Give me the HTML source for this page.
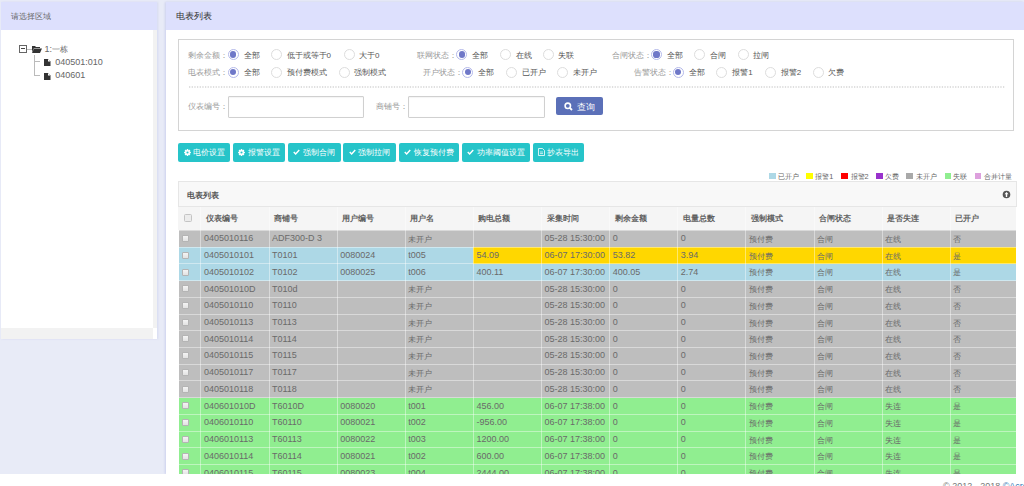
<!DOCTYPE html>
<html><head><meta charset="utf-8">
<style>
*{box-sizing:border-box;margin:0;padding:0}
html,body{width:1024px;height:486px;overflow:hidden;background:#e8ebf7;font-family:"Liberation Sans",sans-serif;color:#555}
.a{position:absolute;white-space:nowrap}
.panel-h{position:absolute;background:#dde0fd}
.ttl{position:absolute;font-size:8px;color:#666;line-height:10px}
#lp{position:absolute;left:1px;top:1.5px;width:156px;height:337.5px;box-shadow:1px 0 2px rgba(110,120,210,.15)}
#rp{position:absolute;left:166px;top:1.5px;width:858px;height:472px;background:#fff;box-shadow:-1px 0 2px rgba(110,120,210,.22)}
#foot{position:absolute;left:0;top:473.6px;width:1024px;height:13px;background:#fff}
.lbl{position:absolute;font-size:7.6px;color:#999;line-height:10px;white-space:nowrap}
.opt{position:absolute;font-size:8px;color:#555;line-height:10px;white-space:nowrap}
.rad{position:absolute;width:11px;height:11px;border-radius:50%;border:1px solid #ddd;background:#fff}
.rad.on{border:1.2px solid #b4b9ea}
.rad.on:after{content:"";position:absolute;left:1.3px;top:1.3px;width:6.2px;height:6.2px;border-radius:50%;background:#6f78c8}
.btn{position:absolute;top:143px;height:18.7px;background:#26c4c9;border-radius:2px;color:#fff;font-size:7.5px;line-height:18.7px;padding-top:0.8px;white-space:nowrap}
.leg{position:absolute;top:172.5px;width:6.6px;height:6.4px}
.legt{position:absolute;top:171.6px;font-size:7.3px;line-height:10px;color:#666;white-space:nowrap}
.gl{background:rgba(255,255,255,.42)}
.th{font-size:7.8px;line-height:10px;color:#606060;font-weight:700}
.td{font-size:9px;line-height:10px;color:#6a6a6a}
.c{font-size:8.3px;position:relative;top:0.5px}
.hcb{width:7.5px;height:7.5px;background:#ececec;border:1px solid #c4c4c4;border-radius:1.5px}
.rcb{width:7px;height:7px;background:linear-gradient(#f4f4f4,#e2e2e2);border:1px solid #b4b4b4;border-radius:1px}
</style></head><body>

<!-- left panel -->
<div id="lp">
  <div class="panel-h" style="left:0;top:0;width:156px;height:28px"></div>
  <div class="ttl" style="left:9.5px;top:10.5px">请选择区域</div>
  <div style="position:absolute;left:0;top:28px;width:152px;height:299px;background:#fff"></div>
  <div style="position:absolute;left:152px;top:28px;width:4px;height:299px;background:#f2f2f2"></div>
  <div style="position:absolute;left:0;top:326.5px;width:152px;height:11px;background:#f2f2f2"></div>
  <div style="position:absolute;left:152px;top:326.5px;width:4px;height:11px;background:#fff"></div>
</div>
<!-- tree -->
<div class="a" style="left:19px;top:44.7px;width:8px;height:8px;border:1px solid #666"></div>
<div class="a" style="left:21px;top:48.3px;width:4px;height:1px;background:#444"></div>
<div class="a" style="left:27px;top:48.5px;width:5px;height:1px;background:#bbb"></div>
<svg class="a" style="left:32px;top:45px" width="10" height="8" viewBox="0 0 10 8"><path d="M0 1h3l1 1h4v1H2L0 7z M2 3.5h8L8 8H0z" fill="#333"/></svg>
<div class="a" style="left:44.5px;top:44px;font-size:9px;line-height:10px;color:#666">1:<span style="font-size:8px">一栋</span></div>
<div class="a" style="left:34.4px;top:55px;width:1px;height:20px;background:#bbb"></div>
<div class="a" style="left:34.4px;top:61px;width:6px;height:1px;background:#bbb"></div>
<div class="a" style="left:34.4px;top:75px;width:6px;height:1px;background:#bbb"></div>
<svg class="a" style="left:44px;top:59px" width="7" height="7" viewBox="0 0 7 7"><path d="M0 0h4l2.5 2.5V7H0z" fill="#333"/><path d="M4 0v2.5h2.5" fill="#fff"/></svg>
<svg class="a" style="left:44px;top:72.5px" width="7" height="7" viewBox="0 0 7 7"><path d="M0 0h4l2.5 2.5V7H0z" fill="#333"/><path d="M4 0v2.5h2.5" fill="#fff"/></svg>
<div class="a" style="left:55.3px;top:56.5px;font-size:9px;line-height:10px;color:#666">040501:010</div>
<div class="a" style="left:55.3px;top:70px;font-size:9px;line-height:10px;color:#666">040601</div>

<!-- right panel -->
<div id="rp">
  <div class="panel-h" style="left:0;top:0;width:858px;height:28px"></div>
  <div class="ttl" style="left:9.5px;top:9.6px;color:#333;font-size:9px;font-weight:400">电表列表</div>
</div>

<!-- filter box -->
<div class="a" style="left:178px;top:39px;width:836px;height:92px;border:1px solid #d4d4d4"></div>
<svg class="a" style="left:188.5px;top:86px" width="816" height="2"><line x1="0" y1="1" x2="816" y2="1" stroke="#c0c0c0" stroke-width="1.1" stroke-dasharray="1.3 1.36"/></svg>


<div class="lbl" style="left:188.2px;top:50.70px">剩余金额：</div>
<div class="rad on" style="left:227.60px;top:49.10px"></div>
<div class="opt" style="left:243.75px;top:50.80px">全部</div>
<div class="rad" style="left:271.05px;top:49.10px"></div>
<div class="opt" style="left:286.6px;top:50.80px">低于或等于0</div>
<div class="rad" style="left:343.55px;top:49.10px"></div>
<div class="opt" style="left:359px;top:50.80px">大于0</div>
<div class="lbl" style="left:417.2px;top:50.70px">联网状态：</div>
<div class="rad on" style="left:456.40px;top:49.10px"></div>
<div class="opt" style="left:471.9px;top:50.80px">全部</div>
<div class="rad" style="left:499.80px;top:49.10px"></div>
<div class="opt" style="left:515.6px;top:50.80px">在线</div>
<div class="rad" style="left:543.20px;top:49.10px"></div>
<div class="opt" style="left:558.4px;top:50.80px">失联</div>
<div class="lbl" style="left:611.6px;top:50.70px">合闸状态：</div>
<div class="rad on" style="left:651.05px;top:49.10px"></div>
<div class="opt" style="left:666.6px;top:50.80px">全部</div>
<div class="rad" style="left:694.20px;top:49.10px"></div>
<div class="opt" style="left:710px;top:50.80px">合闸</div>
<div class="rad" style="left:737.50px;top:49.10px"></div>
<div class="opt" style="left:753.2px;top:50.80px">拉闸</div>
<div class="lbl" style="left:188.2px;top:68.20px">电表模式：</div>
<div class="rad on" style="left:227.60px;top:66.60px"></div>
<div class="opt" style="left:243.75px;top:68.30px">全部</div>
<div class="rad" style="left:271.05px;top:66.60px"></div>
<div class="opt" style="left:286.6px;top:68.30px">预付费模式</div>
<div class="rad" style="left:338.55px;top:66.60px"></div>
<div class="opt" style="left:354.4px;top:68.30px">强制模式</div>
<div class="lbl" style="left:422.8px;top:68.20px">开户状态：</div>
<div class="rad on" style="left:462.30px;top:66.60px"></div>
<div class="opt" style="left:478px;top:68.30px">全部</div>
<div class="rad" style="left:505.80px;top:66.60px"></div>
<div class="opt" style="left:521.9px;top:68.30px">已开户</div>
<div class="rad" style="left:557.30px;top:66.60px"></div>
<div class="opt" style="left:572.8px;top:68.30px">未开户</div>
<div class="lbl" style="left:633.75px;top:68.20px">告警状态：</div>
<div class="rad on" style="left:672.80px;top:66.60px"></div>
<div class="opt" style="left:689px;top:68.30px">全部</div>
<div class="rad" style="left:716.30px;top:66.60px"></div>
<div class="opt" style="left:732.3px;top:68.30px">报警1</div>
<div class="rad" style="left:765.10px;top:66.60px"></div>
<div class="opt" style="left:780.7px;top:68.30px">报警2</div>
<div class="rad" style="left:812.80px;top:66.60px"></div>
<div class="opt" style="left:828.2px;top:68.30px">欠费</div>
<div class="lbl" style="left:188px;top:102.00px">仪表编号：</div>
<div class="a" style="left:228.1px;top:96px;width:136.2px;height:21.6px;border:1px solid #d0d0d0;border-radius:1px;box-shadow:inset 0 0.5px 1px rgba(0,0,0,.08);background:#fff"></div>
<div class="lbl" style="left:375.6px;top:102.00px">商铺号：</div>
<div class="a" style="left:408.4px;top:96px;width:136.4px;height:21.6px;border:1px solid #d0d0d0;border-radius:1px;box-shadow:inset 0 0.5px 1px rgba(0,0,0,.08);background:#fff"></div>
<div class="a" style="left:556.25px;top:96.6px;width:46.25px;height:18.4px;background:#5b70b8;border-radius:2px"></div>
<svg class="a" style="left:564px;top:101.5px" width="9" height="9" viewBox="0 0 9 9"><circle cx="3.8" cy="3.8" r="2.7" stroke="#fff" stroke-width="1.6" fill="none"/><path d="M5.8 5.8L8 8" stroke="#fff" stroke-width="1.8"/></svg>
<div class="a" style="left:577px;top:101.7px;font-size:8.7px;line-height:10px;color:#fff">查询</div>
<div class="btn" style="left:178.3px;width:51.89999999999998px;text-align:center"><svg width="7" height="7" viewBox="0 0 8 8" style="vertical-align:-1.2px;margin-right:2.2px"><g fill="#fff"><circle cx="4" cy="4" r="2.9"/><rect x="3.1" y="0.1" width="1.8" height="7.8" rx="0.3" transform="rotate(0 4 4)"/><rect x="3.1" y="0.1" width="1.8" height="7.8" rx="0.3" transform="rotate(45 4 4)"/><rect x="3.1" y="0.1" width="1.8" height="7.8" rx="0.3" transform="rotate(90 4 4)"/><rect x="3.1" y="0.1" width="1.8" height="7.8" rx="0.3" transform="rotate(135 4 4)"/></g><circle cx="4" cy="4" r="1.2" fill="#26c4c9"/></svg>电价设置</div>
<div class="btn" style="left:233.2px;width:51.60000000000002px;text-align:center"><svg width="7" height="7" viewBox="0 0 8 8" style="vertical-align:-1.2px;margin-right:2.2px"><g fill="#fff"><circle cx="4" cy="4" r="2.9"/><rect x="3.1" y="0.1" width="1.8" height="7.8" rx="0.3" transform="rotate(0 4 4)"/><rect x="3.1" y="0.1" width="1.8" height="7.8" rx="0.3" transform="rotate(45 4 4)"/><rect x="3.1" y="0.1" width="1.8" height="7.8" rx="0.3" transform="rotate(90 4 4)"/><rect x="3.1" y="0.1" width="1.8" height="7.8" rx="0.3" transform="rotate(135 4 4)"/></g><circle cx="4" cy="4" r="1.2" fill="#26c4c9"/></svg>报警设置</div>
<div class="btn" style="left:287.5px;width:53.39999999999998px;text-align:center"><svg width="7" height="6" viewBox="0 0 8 7" style="vertical-align:-0.5px;margin-right:2.5px"><path d="M0.8 3.6L3 5.8L7.2 1.2" stroke="#fff" stroke-width="1.7" fill="none"/></svg>强制合闸</div>
<div class="btn" style="left:343.2px;width:53.0px;text-align:center"><svg width="7" height="6" viewBox="0 0 8 7" style="vertical-align:-0.5px;margin-right:2.5px"><path d="M0.8 3.6L3 5.8L7.2 1.2" stroke="#fff" stroke-width="1.7" fill="none"/></svg>强制拉闸</div>
<div class="btn" style="left:398.9px;width:60.60000000000002px;text-align:center"><svg width="7" height="6" viewBox="0 0 8 7" style="vertical-align:-0.5px;margin-right:2.5px"><path d="M0.8 3.6L3 5.8L7.2 1.2" stroke="#fff" stroke-width="1.7" fill="none"/></svg>恢复预付费</div>
<div class="btn" style="left:462.4px;width:67.39999999999998px;text-align:center"><svg width="7" height="6" viewBox="0 0 8 7" style="vertical-align:-0.5px;margin-right:2.5px"><path d="M0.8 3.6L3 5.8L7.2 1.2" stroke="#fff" stroke-width="1.7" fill="none"/></svg>功率阈值设置</div>
<div class="btn" style="left:533.1px;width:51.39999999999998px;text-align:center"><svg width="7" height="8" viewBox="0 0 7 8" style="vertical-align:-1.5px;margin-right:2px"><path d="M0.5 0.5h4l2 2v5h-6z" stroke="#fff" stroke-width="0.8" fill="none"/><path d="M2 4h3M2 5.6h3" stroke="#fff" stroke-width="0.7"/></svg>抄表导出</div>
<div class="leg" style="left:769px;background:#add8e6"></div><div class="legt" style="left:778px">已开户</div>
<div class="leg" style="left:806.2px;background:#ffff00"></div><div class="legt" style="left:815.3px">报警1</div>
<div class="leg" style="left:841.4px;background:#ff0000"></div><div class="legt" style="left:850.5px">报警2</div>
<div class="leg" style="left:876.2px;background:#9932cc"></div><div class="legt" style="left:884.9px">欠费</div>
<div class="leg" style="left:906.4px;background:#a9a9a9"></div><div class="legt" style="left:915.5px">未开户</div>
<div class="leg" style="left:944.5px;background:#90ee90"></div><div class="legt" style="left:953.2px">失联</div>
<div class="leg" style="left:974.7px;background:#dda0dd"></div><div class="legt" style="left:983.9px">合并计量</div>
<div class="a" style="left:178.4px;top:181.4px;width:838.6px;height:25.6px;background:#f8f8f8;border:1px solid #e6e6e6"></div>
<div class="a" style="left:186.5px;top:190.5px;font-size:8px;line-height:10px;color:#555;font-weight:700">电表列表</div>
<svg class="a" style="left:1002px;top:190px" width="9" height="9" viewBox="0 0 9 9"><circle cx="4.5" cy="4.5" r="3.8" fill="#555"/><path d="M4.5 2L2.5 4.3h1.3V7h1.4V4.3h1.3z" fill="#fff"/></svg>
<div class="a" style="left:178.4px;top:206.5px;width:838.0px;height:23.900000000000006px;background:#f5f5f5"></div>
<div class="a" style="left:179.00px;top:230.40px;width:837.40px;height:17.33px;background:#bebebe"></div>
<div class="a" style="left:179.00px;top:247.13px;width:837.40px;height:17.33px;background:#add8e6"></div>
<div class="a" style="left:473.42px;top:247.13px;width:542.98px;height:16.73px;background:#ffd700"></div>
<div class="a" style="left:179.00px;top:263.86px;width:837.40px;height:17.33px;background:#add8e6"></div>
<div class="a" style="left:179.00px;top:280.59px;width:837.40px;height:17.33px;background:#bebebe"></div>
<div class="a" style="left:179.00px;top:297.32px;width:837.40px;height:17.33px;background:#bebebe"></div>
<div class="a" style="left:179.00px;top:314.05px;width:837.40px;height:17.33px;background:#bebebe"></div>
<div class="a" style="left:179.00px;top:330.78px;width:837.40px;height:17.33px;background:#bebebe"></div>
<div class="a" style="left:179.00px;top:347.51px;width:837.40px;height:17.33px;background:#bebebe"></div>
<div class="a" style="left:179.00px;top:364.24px;width:837.40px;height:17.33px;background:#bebebe"></div>
<div class="a" style="left:179.00px;top:380.97px;width:837.40px;height:17.33px;background:#bebebe"></div>
<div class="a" style="left:179.00px;top:397.70px;width:837.40px;height:17.33px;background:#90ee90"></div>
<div class="a" style="left:179.00px;top:414.43px;width:837.40px;height:17.33px;background:#90ee90"></div>
<div class="a" style="left:179.00px;top:431.16px;width:837.40px;height:17.33px;background:#90ee90"></div>
<div class="a" style="left:179.00px;top:447.89px;width:837.40px;height:17.33px;background:#90ee90"></div>
<div class="a" style="left:179.00px;top:464.62px;width:837.40px;height:17.33px;background:#90ee90"></div>
<div class="a gl" style="left:200.40px;top:206.5px;width:1px;height:279.5px"></div>
<div class="a gl" style="left:268.53px;top:206.5px;width:1px;height:279.5px"></div>
<div class="a gl" style="left:336.66px;top:206.5px;width:1px;height:279.5px"></div>
<div class="a gl" style="left:404.79px;top:206.5px;width:1px;height:279.5px"></div>
<div class="a gl" style="left:472.92px;top:206.5px;width:1px;height:279.5px"></div>
<div class="a gl" style="left:541.05px;top:206.5px;width:1px;height:279.5px"></div>
<div class="a gl" style="left:609.18px;top:206.5px;width:1px;height:279.5px"></div>
<div class="a gl" style="left:677.31px;top:206.5px;width:1px;height:279.5px"></div>
<div class="a gl" style="left:745.44px;top:206.5px;width:1px;height:279.5px"></div>
<div class="a gl" style="left:813.57px;top:206.5px;width:1px;height:279.5px"></div>
<div class="a gl" style="left:881.70px;top:206.5px;width:1px;height:279.5px"></div>
<div class="a gl" style="left:949.83px;top:206.5px;width:1px;height:279.5px"></div>
<div class="a gl" style="left:178.4px;top:229.90px;width:838.0px;height:1px"></div>
<div class="a gl" style="left:178.4px;top:246.63px;width:838.0px;height:1px"></div>
<div class="a gl" style="left:178.4px;top:263.36px;width:838.0px;height:1px"></div>
<div class="a gl" style="left:178.4px;top:280.09px;width:838.0px;height:1px"></div>
<div class="a gl" style="left:178.4px;top:296.82px;width:838.0px;height:1px"></div>
<div class="a gl" style="left:178.4px;top:313.55px;width:838.0px;height:1px"></div>
<div class="a gl" style="left:178.4px;top:330.28px;width:838.0px;height:1px"></div>
<div class="a gl" style="left:178.4px;top:347.01px;width:838.0px;height:1px"></div>
<div class="a gl" style="left:178.4px;top:363.74px;width:838.0px;height:1px"></div>
<div class="a gl" style="left:178.4px;top:380.47px;width:838.0px;height:1px"></div>
<div class="a gl" style="left:178.4px;top:397.20px;width:838.0px;height:1px"></div>
<div class="a gl" style="left:178.4px;top:413.93px;width:838.0px;height:1px"></div>
<div class="a gl" style="left:178.4px;top:430.66px;width:838.0px;height:1px"></div>
<div class="a gl" style="left:178.4px;top:447.39px;width:838.0px;height:1px"></div>
<div class="a gl" style="left:178.4px;top:464.12px;width:838.0px;height:1px"></div>
<div class="a gl" style="left:178.4px;top:480.85px;width:838.0px;height:1px"></div>
<div class="a hcb" style="left:184.1px;top:214.2px"></div>
<div class="a th" style="left:205.90px;top:214.05px">仪表编号</div>
<div class="a th" style="left:274.03px;top:214.05px">商铺号</div>
<div class="a th" style="left:342.16px;top:214.05px">用户编号</div>
<div class="a th" style="left:410.29px;top:214.05px">用户名</div>
<div class="a th" style="left:478.42px;top:214.05px">购电总额</div>
<div class="a th" style="left:546.55px;top:214.05px">采集时间</div>
<div class="a th" style="left:614.68px;top:214.05px">剩余金额</div>
<div class="a th" style="left:682.81px;top:214.05px">电量总数</div>
<div class="a th" style="left:750.94px;top:214.05px">强制模式</div>
<div class="a th" style="left:819.07px;top:214.05px">合闸状态</div>
<div class="a th" style="left:887.20px;top:214.05px">是否失连</div>
<div class="a th" style="left:955.33px;top:214.05px">已开户</div>
<div class="a rcb" style="left:182px;top:235.07px"></div>
<div class="a td" style="left:203.90px;top:233.37px">0405010116</div>
<div class="a td" style="left:272.03px;top:233.37px">ADF300-D 3</div>
<div class="a td" style="left:408.29px;top:233.37px"><span class=c>未开户</span></div>
<div class="a td" style="left:544.55px;top:233.37px">05-28 15:30:00</div>
<div class="a td" style="left:612.68px;top:233.37px">0</div>
<div class="a td" style="left:680.81px;top:233.37px">0</div>
<div class="a td" style="left:748.94px;top:233.37px"><span class=c>预付费</span></div>
<div class="a td" style="left:817.07px;top:233.37px"><span class=c>合闸</span></div>
<div class="a td" style="left:885.20px;top:233.37px"><span class=c>在线</span></div>
<div class="a td" style="left:953.33px;top:233.37px"><span class=c>否</span></div>
<div class="a rcb" style="left:182px;top:251.80px"></div>
<div class="a td" style="left:203.90px;top:250.09px">0405010101</div>
<div class="a td" style="left:272.03px;top:250.09px">T0101</div>
<div class="a td" style="left:340.16px;top:250.09px">0080024</div>
<div class="a td" style="left:408.29px;top:250.09px">t005</div>
<div class="a td" style="left:476.42px;top:250.09px">54.09</div>
<div class="a td" style="left:544.55px;top:250.09px">06-07 17:30:00</div>
<div class="a td" style="left:612.68px;top:250.09px">53.82</div>
<div class="a td" style="left:680.81px;top:250.09px">3.94</div>
<div class="a td" style="left:748.94px;top:250.09px"><span class=c>预付费</span></div>
<div class="a td" style="left:817.07px;top:250.09px"><span class=c>合闸</span></div>
<div class="a td" style="left:885.20px;top:250.09px"><span class=c>在线</span></div>
<div class="a td" style="left:953.33px;top:250.09px"><span class=c>是</span></div>
<div class="a rcb" style="left:182px;top:268.53px"></div>
<div class="a td" style="left:203.90px;top:266.83px">0405010102</div>
<div class="a td" style="left:272.03px;top:266.83px">T0102</div>
<div class="a td" style="left:340.16px;top:266.83px">0080025</div>
<div class="a td" style="left:408.29px;top:266.83px">t006</div>
<div class="a td" style="left:476.42px;top:266.83px">400.11</div>
<div class="a td" style="left:544.55px;top:266.83px">06-07 17:30:00</div>
<div class="a td" style="left:612.68px;top:266.83px">400.05</div>
<div class="a td" style="left:680.81px;top:266.83px">2.74</div>
<div class="a td" style="left:748.94px;top:266.83px"><span class=c>预付费</span></div>
<div class="a td" style="left:817.07px;top:266.83px"><span class=c>合闸</span></div>
<div class="a td" style="left:885.20px;top:266.83px"><span class=c>在线</span></div>
<div class="a td" style="left:953.33px;top:266.83px"><span class=c>是</span></div>
<div class="a rcb" style="left:182px;top:285.26px"></div>
<div class="a td" style="left:203.90px;top:283.56px">040501010D</div>
<div class="a td" style="left:272.03px;top:283.56px">T010d</div>
<div class="a td" style="left:408.29px;top:283.56px"><span class=c>未开户</span></div>
<div class="a td" style="left:544.55px;top:283.56px">05-28 15:30:00</div>
<div class="a td" style="left:612.68px;top:283.56px">0</div>
<div class="a td" style="left:680.81px;top:283.56px">0</div>
<div class="a td" style="left:748.94px;top:283.56px"><span class=c>预付费</span></div>
<div class="a td" style="left:817.07px;top:283.56px"><span class=c>合闸</span></div>
<div class="a td" style="left:885.20px;top:283.56px"><span class=c>在线</span></div>
<div class="a td" style="left:953.33px;top:283.56px"><span class=c>否</span></div>
<div class="a rcb" style="left:182px;top:301.99px"></div>
<div class="a td" style="left:203.90px;top:300.29px">0405010110</div>
<div class="a td" style="left:272.03px;top:300.29px">T0110</div>
<div class="a td" style="left:408.29px;top:300.29px"><span class=c>未开户</span></div>
<div class="a td" style="left:544.55px;top:300.29px">05-28 15:30:00</div>
<div class="a td" style="left:612.68px;top:300.29px">0</div>
<div class="a td" style="left:680.81px;top:300.29px">0</div>
<div class="a td" style="left:748.94px;top:300.29px"><span class=c>预付费</span></div>
<div class="a td" style="left:817.07px;top:300.29px"><span class=c>合闸</span></div>
<div class="a td" style="left:885.20px;top:300.29px"><span class=c>在线</span></div>
<div class="a td" style="left:953.33px;top:300.29px"><span class=c>否</span></div>
<div class="a rcb" style="left:182px;top:318.72px"></div>
<div class="a td" style="left:203.90px;top:317.02px">0405010113</div>
<div class="a td" style="left:272.03px;top:317.02px">T0113</div>
<div class="a td" style="left:408.29px;top:317.02px"><span class=c>未开户</span></div>
<div class="a td" style="left:544.55px;top:317.02px">05-28 15:30:00</div>
<div class="a td" style="left:612.68px;top:317.02px">0</div>
<div class="a td" style="left:680.81px;top:317.02px">0</div>
<div class="a td" style="left:748.94px;top:317.02px"><span class=c>预付费</span></div>
<div class="a td" style="left:817.07px;top:317.02px"><span class=c>合闸</span></div>
<div class="a td" style="left:885.20px;top:317.02px"><span class=c>在线</span></div>
<div class="a td" style="left:953.33px;top:317.02px"><span class=c>否</span></div>
<div class="a rcb" style="left:182px;top:335.44px"></div>
<div class="a td" style="left:203.90px;top:333.75px">0405010114</div>
<div class="a td" style="left:272.03px;top:333.75px">T0114</div>
<div class="a td" style="left:408.29px;top:333.75px"><span class=c>未开户</span></div>
<div class="a td" style="left:544.55px;top:333.75px">05-28 15:30:00</div>
<div class="a td" style="left:612.68px;top:333.75px">0</div>
<div class="a td" style="left:680.81px;top:333.75px">0</div>
<div class="a td" style="left:748.94px;top:333.75px"><span class=c>预付费</span></div>
<div class="a td" style="left:817.07px;top:333.75px"><span class=c>合闸</span></div>
<div class="a td" style="left:885.20px;top:333.75px"><span class=c>在线</span></div>
<div class="a td" style="left:953.33px;top:333.75px"><span class=c>否</span></div>
<div class="a rcb" style="left:182px;top:352.18px"></div>
<div class="a td" style="left:203.90px;top:350.48px">0405010115</div>
<div class="a td" style="left:272.03px;top:350.48px">T0115</div>
<div class="a td" style="left:408.29px;top:350.48px"><span class=c>未开户</span></div>
<div class="a td" style="left:544.55px;top:350.48px">05-28 15:30:00</div>
<div class="a td" style="left:612.68px;top:350.48px">0</div>
<div class="a td" style="left:680.81px;top:350.48px">0</div>
<div class="a td" style="left:748.94px;top:350.48px"><span class=c>预付费</span></div>
<div class="a td" style="left:817.07px;top:350.48px"><span class=c>合闸</span></div>
<div class="a td" style="left:885.20px;top:350.48px"><span class=c>在线</span></div>
<div class="a td" style="left:953.33px;top:350.48px"><span class=c>否</span></div>
<div class="a rcb" style="left:182px;top:368.91px"></div>
<div class="a td" style="left:203.90px;top:367.21px">0405010117</div>
<div class="a td" style="left:272.03px;top:367.21px">T0117</div>
<div class="a td" style="left:408.29px;top:367.21px"><span class=c>未开户</span></div>
<div class="a td" style="left:544.55px;top:367.21px">05-28 15:30:00</div>
<div class="a td" style="left:612.68px;top:367.21px">0</div>
<div class="a td" style="left:680.81px;top:367.21px">0</div>
<div class="a td" style="left:748.94px;top:367.21px"><span class=c>预付费</span></div>
<div class="a td" style="left:817.07px;top:367.21px"><span class=c>合闸</span></div>
<div class="a td" style="left:885.20px;top:367.21px"><span class=c>在线</span></div>
<div class="a td" style="left:953.33px;top:367.21px"><span class=c>否</span></div>
<div class="a rcb" style="left:182px;top:385.64px"></div>
<div class="a td" style="left:203.90px;top:383.94px">0405010118</div>
<div class="a td" style="left:272.03px;top:383.94px">T0118</div>
<div class="a td" style="left:408.29px;top:383.94px"><span class=c>未开户</span></div>
<div class="a td" style="left:544.55px;top:383.94px">05-28 15:30:00</div>
<div class="a td" style="left:612.68px;top:383.94px">0</div>
<div class="a td" style="left:680.81px;top:383.94px">0</div>
<div class="a td" style="left:748.94px;top:383.94px"><span class=c>预付费</span></div>
<div class="a td" style="left:817.07px;top:383.94px"><span class=c>合闸</span></div>
<div class="a td" style="left:885.20px;top:383.94px"><span class=c>在线</span></div>
<div class="a td" style="left:953.33px;top:383.94px"><span class=c>否</span></div>
<div class="a rcb" style="left:182px;top:402.37px"></div>
<div class="a td" style="left:203.90px;top:400.67px">040601010D</div>
<div class="a td" style="left:272.03px;top:400.67px">T6010D</div>
<div class="a td" style="left:340.16px;top:400.67px">0080020</div>
<div class="a td" style="left:408.29px;top:400.67px">t001</div>
<div class="a td" style="left:476.42px;top:400.67px">456.00</div>
<div class="a td" style="left:544.55px;top:400.67px">06-07 17:38:00</div>
<div class="a td" style="left:612.68px;top:400.67px">0</div>
<div class="a td" style="left:680.81px;top:400.67px">0</div>
<div class="a td" style="left:748.94px;top:400.67px"><span class=c>预付费</span></div>
<div class="a td" style="left:817.07px;top:400.67px"><span class=c>合闸</span></div>
<div class="a td" style="left:885.20px;top:400.67px"><span class=c>失连</span></div>
<div class="a td" style="left:953.33px;top:400.67px"><span class=c>是</span></div>
<div class="a rcb" style="left:182px;top:419.10px"></div>
<div class="a td" style="left:203.90px;top:417.40px">0406010110</div>
<div class="a td" style="left:272.03px;top:417.40px">T60110</div>
<div class="a td" style="left:340.16px;top:417.40px">0080021</div>
<div class="a td" style="left:408.29px;top:417.40px">t002</div>
<div class="a td" style="left:476.42px;top:417.40px">-956.00</div>
<div class="a td" style="left:544.55px;top:417.40px">06-07 17:38:00</div>
<div class="a td" style="left:612.68px;top:417.40px">0</div>
<div class="a td" style="left:680.81px;top:417.40px">0</div>
<div class="a td" style="left:748.94px;top:417.40px"><span class=c>预付费</span></div>
<div class="a td" style="left:817.07px;top:417.40px"><span class=c>合闸</span></div>
<div class="a td" style="left:885.20px;top:417.40px"><span class=c>失连</span></div>
<div class="a td" style="left:953.33px;top:417.40px"><span class=c>是</span></div>
<div class="a rcb" style="left:182px;top:435.82px"></div>
<div class="a td" style="left:203.90px;top:434.12px">0406010113</div>
<div class="a td" style="left:272.03px;top:434.12px">T60113</div>
<div class="a td" style="left:340.16px;top:434.12px">0080022</div>
<div class="a td" style="left:408.29px;top:434.12px">t003</div>
<div class="a td" style="left:476.42px;top:434.12px">1200.00</div>
<div class="a td" style="left:544.55px;top:434.12px">06-07 17:38:00</div>
<div class="a td" style="left:612.68px;top:434.12px">0</div>
<div class="a td" style="left:680.81px;top:434.12px">0</div>
<div class="a td" style="left:748.94px;top:434.12px"><span class=c>预付费</span></div>
<div class="a td" style="left:817.07px;top:434.12px"><span class=c>合闸</span></div>
<div class="a td" style="left:885.20px;top:434.12px"><span class=c>失连</span></div>
<div class="a td" style="left:953.33px;top:434.12px"><span class=c>是</span></div>
<div class="a rcb" style="left:182px;top:452.56px"></div>
<div class="a td" style="left:203.90px;top:450.86px">0406010114</div>
<div class="a td" style="left:272.03px;top:450.86px">T60114</div>
<div class="a td" style="left:340.16px;top:450.86px">0080021</div>
<div class="a td" style="left:408.29px;top:450.86px">t002</div>
<div class="a td" style="left:476.42px;top:450.86px">600.00</div>
<div class="a td" style="left:544.55px;top:450.86px">06-07 17:38:00</div>
<div class="a td" style="left:612.68px;top:450.86px">0</div>
<div class="a td" style="left:680.81px;top:450.86px">0</div>
<div class="a td" style="left:748.94px;top:450.86px"><span class=c>预付费</span></div>
<div class="a td" style="left:817.07px;top:450.86px"><span class=c>合闸</span></div>
<div class="a td" style="left:885.20px;top:450.86px"><span class=c>失连</span></div>
<div class="a td" style="left:953.33px;top:450.86px"><span class=c>是</span></div>
<div class="a rcb" style="left:182px;top:469.29px"></div>
<div class="a td" style="left:203.90px;top:467.59px">0406010115</div>
<div class="a td" style="left:272.03px;top:467.59px">T60115</div>
<div class="a td" style="left:340.16px;top:467.59px">0080023</div>
<div class="a td" style="left:408.29px;top:467.59px">t004</div>
<div class="a td" style="left:476.42px;top:467.59px">2444.00</div>
<div class="a td" style="left:544.55px;top:467.59px">06-07 17:38:00</div>
<div class="a td" style="left:612.68px;top:467.59px">0</div>
<div class="a td" style="left:680.81px;top:467.59px">0</div>
<div class="a td" style="left:748.94px;top:467.59px"><span class=c>预付费</span></div>
<div class="a td" style="left:817.07px;top:467.59px"><span class=c>合闸</span></div>
<div class="a td" style="left:885.20px;top:467.59px"><span class=c>失连</span></div>
<div class="a td" style="left:953.33px;top:467.59px"><span class=c>是</span></div>
<div id="foot"></div>
<div class="a" style="left:943px;top:481px;font-size:9px;line-height:10px;color:#777">© 2012 - 2018 <span style="color:#337ab7">©Acrel</span></div>
</body></html>
